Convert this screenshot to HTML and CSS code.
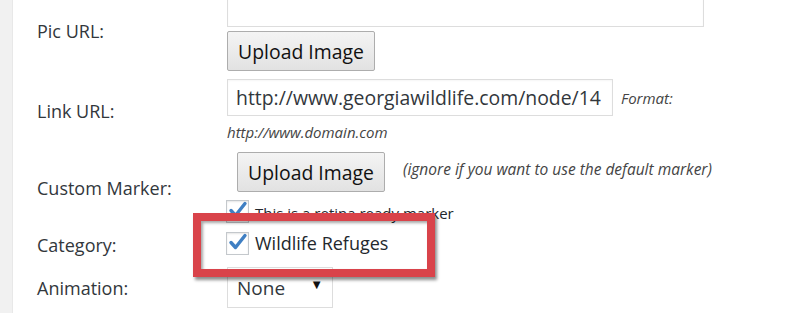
FILE: index.html
```html
<!DOCTYPE html>
<html>
<head>
<meta charset="utf-8">
<link rel="stylesheet" href="styles.css">
</head>
<body>
<div class="page">
  <div class="strip"></div>
  <div class="main">
    <div class="form">
      <div class="row row-pic">
        <div class="label">Pic URL:</div>
        <div class="field">
          <div class="input input-wide"></div>
          <button class="btn">Upload Image</button>
        </div>
      </div>
      <div class="row row-link">
        <div class="label">Link URL:</div>
        <div class="field">
          <div class="line">
            <div class="input input-link">http://www.georgiawildlife.com/node/14</div>
            <span class="hint hint-format">Format:</span>
          </div>
          <div class="hint hint-domain">http://www.domain.com</div>
        </div>
      </div>
      <div class="row row-marker">
        <div class="label">Custom Marker:</div>
        <div class="field">
          <div class="line">
            <button class="btn btn-marker">Upload Image</button>
            <span class="hint hint-ignore">(ignore if you want to use the default marker)</span>
          </div>
          <div class="check-line check-small">
            <span class="checkbox"><svg viewBox="0 0 24 24" width="24" height="24"><path d="M5 11.5 L9.5 16.5 L19 4.5" fill="none" stroke="#3f7fc3" stroke-width="3.4" stroke-linecap="round" stroke-linejoin="round"/></svg></span>
            <span class="check-text">This is a retina ready marker</span>
          </div>
        </div>
      </div>
      <div class="row row-cat">
        <div class="label">Category:</div>
        <div class="field">
          <div class="check-line check-big">
            <span class="checkbox"><svg viewBox="0 0 24 24" width="24" height="24"><path d="M5 11.5 L9.5 16.5 L19 4.5" fill="none" stroke="#3f7fc3" stroke-width="3.4" stroke-linecap="round" stroke-linejoin="round"/></svg></span>
            <span class="check-text">Wildlife Refuges</span>
          </div>
        </div>
      </div>
      <div class="row row-anim">
        <div class="label">Animation:</div>
        <div class="field">
          <div class="select"><span>None</span><span class="arrow">&#9660;</span></div>
        </div>
      </div>
    </div>
    <div class="highlight"></div>
  </div>
</div>
</body>
</html>
```
FILE: styles.css
```css
html, body {
  margin: 0;
  padding: 0;
  background: #fff;
  overflow: hidden;
}
body {
  font-family: "Open Sans", "Noto Sans", sans-serif;
  color: #23282d;
}
.page {
  display: flex;
  width: 800px;
  height: 313px;
  overflow: hidden;
}
.strip {
  flex: 0 0 12px;
  background: #f1f1f1;
  border-right: 1px solid #e8e8e8;
}
.main {
  position: relative;
  flex: 1;
  padding-left: 24px;
}
.form {
  margin-top: -10px;
}
.row {
  display: flex;
  align-items: center;
}
.label {
  flex: 0 0 190px;
  font-size: 18px;
  color: #32373c;
}
.field {
  display: flex;
  flex-direction: column;
  align-items: flex-start;
}
.line {
  display: flex;
  align-items: center;
}
.input {
  box-sizing: border-box;
  height: 37px;
  border: 1px solid #ddd;
  background: #fff;
  box-shadow: inset 0 1px 2px rgba(0,0,0,.04);
}
.input-wide {
  width: 477px;
}
.input-link {
  width: 386px;
  padding: 0 0 0 8px;
  font-size: 19.4px;
  line-height: 35px;
  white-space: nowrap;
  overflow: hidden;
  color: #32373c;
}
.btn {
  box-sizing: border-box;
  height: 40px;
  width: 148px;
  margin-top: 4px;
  padding: 0;
  font-family: "Open Sans", "Noto Sans", sans-serif;
  font-size: 19.4px;
  color: #111;
  border: 1px solid #adadad;
  border-radius: 2px;
  background: linear-gradient(#f4f4f4, #e2e2e2);
}
.row-link {
  margin-top: 8px;
}
.hint {
  font-style: italic;
  color: #444;
}
.hint-format {
  font-size: 15px;
  margin-left: 8px;
}
.hint-domain {
  font-size: 15px;
  line-height: 20px;
  margin-top: 6px;
}
.row-marker {
  margin-top: 10px;
}
.btn-marker {
  margin: 0 0 0 10px;
}
.hint-ignore {
  font-size: 15.5px;
  margin-left: 18px;
  margin-top: -6px;
}
.check-line {
  display: flex;
  align-items: center;
}
.checkbox {
  box-sizing: border-box;
  width: 23px;
  height: 23px;
  border: 1px solid #c4c8cc;
  background: #fff;
  box-shadow: inset 0 1px 2px rgba(0,0,0,.1);
  position: relative;
  display: block;
}
.checkbox svg {
  position: absolute;
  left: -1px;
  top: -2px;
}
.check-small {
  margin-top: 7px;
  margin-left: -1px;
}
.check-small .check-text {
  font-size: 15px;
  margin-left: 6px;
  margin-top: 4px;
}
.check-big {
  margin-left: -1px;
}
.check-big .check-text {
  font-size: 18px;
  margin-left: 6px;
}
.row-cat {
  margin-top: 6px;
}
.row-cat .label {
  margin-top: 4px;
}
.row-anim {
  margin-top: 10px;
}
.select {
  box-sizing: border-box;
  width: 106px;
  height: 41px;
  border: 1px solid #ddd;
  display: flex;
  align-items: center;
  justify-content: space-between;
  padding: 0 9px 0 9px;
  font-size: 19px;
  color: #32373c;
}
.arrow {
  font-size: 13px;
  color: #111;
  margin-top: -8px;
}
.highlight {
  position: absolute;
  left: 180px;
  top: 213px;
  width: 242px;
  height: 64px;
  box-sizing: border-box;
  border: 8px solid #d9434a;
  box-shadow: 2px 3px 3px rgba(0,0,0,.45), inset 2px 2px 3px rgba(0,0,0,.35);
}
```
